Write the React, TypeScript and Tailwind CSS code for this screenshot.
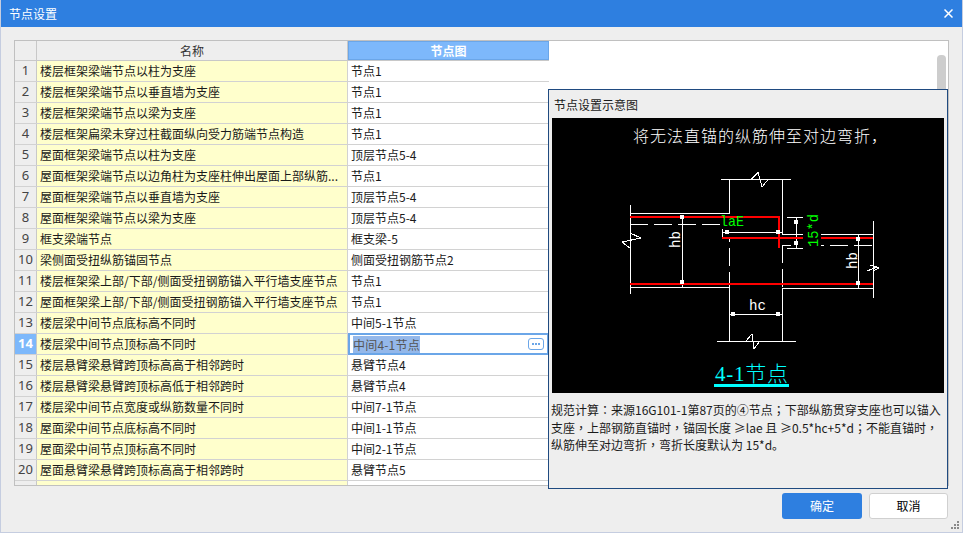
import React from "react";

const cjk = "font-['Noto_Sans_CJK_SC','Noto_Sans','Liberation_Sans',sans-serif]";

const rows = [
	["楼层框架梁端节点以柱为支座", "节点1"],
	["楼层框架梁端节点以垂直墙为支座", "节点1"],
	["楼层框架梁端节点以梁为支座", "节点1"],
	["楼层框架扁梁未穿过柱截面纵向受力筋端节点构造", "节点1"],
	["屋面框架梁端节点以柱为支座", "顶层节点5-4"],
	["屋面框架梁端节点以边角柱为支座柱伸出屋面上部纵筋...", "节点1"],
	["屋面框架梁端节点以垂直墙为支座", "顶层节点5-4"],
	["屋面框架梁端节点以梁为支座", "顶层节点5-4"],
	["框支梁端节点", "框支梁-5"],
	["梁侧面受扭纵筋锚固节点", "侧面受扭钢筋节点2"],
	["楼层框架梁上部/下部/侧面受扭钢筋锚入平行墙支座节点", "节点1"],
	["屋面框架梁上部/下部/侧面受扭钢筋锚入平行墙支座节点", "节点1"],
	["楼层梁中间节点底标高不同时", "中间5-1节点"],
	["楼层梁中间节点顶标高不同时", "中间4-1节点"],
	["楼层悬臂梁悬臂跨顶标高高于相邻跨时", "悬臂节点4"],
	["楼层悬臂梁悬臂跨顶标高低于相邻跨时", "悬臂节点4"],
	["楼层梁中间节点宽度或纵筋数量不同时", "中间7-1节点"],
	["屋面梁中间节点底标高不同时", "中间1-1节点"],
	["屋面梁中间节点顶标高不同时", "中间2-1节点"],
	["屋面悬臂梁悬臂跨顶标高高于相邻跨时", "悬臂节点5"],
];

const noteLines = [
	"规范计算：来源16G101-1第87页的④节点；下部纵筋贯穿支座也可以锚入",
	"支座，上部钢筋直锚时，锚固长度 ≥lae 且 ≥0.5*hc+5*d；不能直锚时，",
	"纵筋伸至对边弯折，弯折长度默认为 15*d。",
];

function Diagram() {
	// viewBox is offset to page coordinates so the numbers read straight off the screenshot
	const white = "M721 179.5H791M729.5 179.5V213.5M782.5 179.5V234.5M630 213.5H729.5M630.5 205V294M630 224.5H648M654 224.5H672M678 224.5H696M702 224.5H720M682.5 215V287M722 232.5H782M722.5 229V237M782 234.5H803M821 234.5H873M782 245.5H791M787 217.5H803M787 248.5H803M796.5 217V248M782.5 245.5V263M782.5 269V287M782.5 288V341M821 245.5H824M830 245.5H848M854 245.5H872M873.5 221V298M858.5 234V288M630 287.5H729.5M782 288.5H873M729.5 239V242M729.5 248V266M729.5 272V287M729.5 287V341M717 341.5H796M729.5 314.5H782.5M751 179.5L758 172.5L762 187L768 179.5M630 233L641 238L622 242L630 248M867 271L877 267L870 265L879 268L873 271V274M746 341L752 334L754 349L760 341";
	return (
		<svg viewBox="552 118 392 275" className="w-[392px] h-[275px] block" shapeRendering="crispEdges">
			<rect x="552" y="118" width="392" height="275" fill="#000" />
			<path d={white} stroke="#fff" strokeWidth="1" fill="none" />
			<path d="M630 216.5H778.5V247.5M722 238H803M821 238H873M630 284H873" stroke="#ff0000" strokeWidth="2" fill="none" />
			{[[682, 217], [682, 282], [727, 232], [778, 232], [796, 222], [796, 243], [858, 239], [858, 283], [733, 314], [778, 314]].map(([x, y]) => (
				<rect key={`${x}-${y}`} x={x - 2} y={y - 2} width="4" height="4" fill="#fff" />
			))}
			<text x="680" y="248" fill="#fff" fontSize="15" fontFamily="Liberation Mono" transform="rotate(-90 680 248)" textLength="17" lengthAdjust="spacingAndGlyphs">hb</text>
			<text x="857" y="269" fill="#fff" fontSize="15" fontFamily="Liberation Mono" transform="rotate(-90 857 269)" textLength="17" lengthAdjust="spacingAndGlyphs">hb</text>
			<text x="749" y="310" fill="#fff" fontSize="15" fontFamily="Liberation Mono" textLength="17" lengthAdjust="spacingAndGlyphs">hc</text>
			<text x="720" y="226" fill="#00ff00" fontSize="15" fontFamily="Liberation Mono" textLength="24" lengthAdjust="spacingAndGlyphs">laE</text>
			<text x="818" y="247" fill="#00ff00" fontSize="15" fontFamily="Liberation Mono" transform="rotate(-90 818 247)" textLength="33" lengthAdjust="spacingAndGlyphs">15*d</text>
			<text x="633" y="142" fill="#fff" fontSize="16" fontWeight="300" fontFamily="Noto Sans CJK SC" letterSpacing="1">将无法直锚的纵筋伸至对边弯折，</text>
			<text x="715" y="381" fill="#00ffff" fontSize="21" fontWeight="300" fontFamily="Liberation Serif, Noto Sans CJK SC" textLength="73">4-1节点</text>
			<rect x="714" y="384" width="75" height="3" fill="#00ffff" />
		</svg>
	);
}

export default function App() {
	return (
		<div className={`w-[963px] h-[533px] relative overflow-hidden bg-[#eeeeee] border-x border-b border-[#c5cde0] flex flex-col text-[12px] text-[#1a1a1a] ${cjk}`}>
			<div className="h-[27px] shrink-0 -mx-px bg-[#2e7fe0] text-white flex items-center justify-between pl-[9px] pr-[10px]">
				<span className="text-[12px]">节点设置</span>
				<svg width="9" height="9" viewBox="0 0 9 9" stroke="#fff" strokeWidth="1.5">
					<path d="M0.5 0.5L8.5 8.5M8.5 0.5L0.5 8.5" />
				</svg>
			</div>

			<div className="mt-[13px] ml-[13px] w-[935px] h-[446px] bg-white border border-[#c0c0c0] overflow-hidden">
				<div className="w-[534px] border-b border-[#c0c0c0]">
					<div className="flex h-[20px] border-b border-[#c8c8c8] bg-[#eeeeee]">
						<div className="w-[22px] border-r border-[#c8c8c8]" />
						<div className="w-[311px] border-r border-[#c8c8c8] flex items-center justify-center text-[#333]">名称</div>
						<div className="w-[201px] bg-[#7db8fb] border border-[#6ba6e8] text-white font-bold flex items-center justify-center">节点图</div>
					</div>
					{rows.map(([name, node], i) => {
						const active = i === 13;
						return (
							<div key={i} className="flex h-[21px] border-b border-[#d2d2d2]">
								<div className={`w-[22px] border-r border-[#c8c8c8] flex items-center justify-center text-[13px] font-['Noto_Sans'] ${active ? "bg-[#7db8fb] text-white font-bold" : "bg-[#eeeeee] text-[#444]"}`}>
									{i + 1}
								</div>
								<div className="w-[311px] bg-[#ffffcc] border-r border-[#d2d2d2] pl-[3px] flex items-center whitespace-nowrap overflow-hidden">{name}</div>
								{active ? (
									<div className="w-[201px] h-[22px] border-2 border-[#6ba6e8] -mt-px flex items-center justify-between pl-[3px] pr-[3px]">
										<span className="bg-[#94b8ea] text-[#555] leading-[17px] tracking-[0.2px]">{node}</span>
										<span className="w-[16px] h-[12px] rounded-[3px] border border-[#6ba6e8] flex items-center justify-center gap-px">
											<i className="w-[2px] h-[2px] bg-[#6ba6e8]" />
											<i className="w-[2px] h-[2px] bg-[#6ba6e8]" />
											<i className="w-[2px] h-[2px] bg-[#6ba6e8]" />
										</span>
									</div>
								) : (
									<div className="w-[201px] pl-[3px] flex items-center whitespace-nowrap">{node}</div>
								)}
							</div>
						);
					})}
					<div className="flex h-[4px]">
						<div className="w-[22px] bg-[#eeeeee] border-r border-[#c8c8c8]" />
						<div className="w-[311px] bg-[#ffffcc] border-r border-[#d2d2d2]" />
					</div>
				</div>
			</div>

			{/* scrollbar thumb, mostly hidden behind the preview popup */}
			<div className="absolute left-[936px] top-[55px] w-[9px] h-[40px] rounded-t-[4px] bg-[#cdcdcd]" />

			{/* preview popup floating over the table */}
			<div className="absolute left-[547px] top-[89px] w-[400px] h-[400px] bg-[#eeeeee] border border-[#1f4a80] flex flex-col">
				<div className="h-[28px] pl-[5px] pt-[7px] leading-[16px]">节点设置示意图</div>
				<div className="ml-[3px]">
					<Diagram />
				</div>
				<div className="mt-[8px] ml-[2px] leading-[17.5px] text-[12px] whitespace-pre">
					{/* the source draws these three marks centred, which is the TC glyph form */}
					{noteLines.map((line) => (
						<div key={line}>
							{line.split(/([：；，])/).map((part, i) =>
								i % 2 ? (
									<span key={i} className="font-['Noto_Sans_CJK_TC']">{part}</span>
								) : (
									<span key={i}>{part}</span>
								)
							)}
						</div>
					))}
				</div>
			</div>

			<div className="mt-[7px] mr-[14px] flex justify-end gap-[7px]">
				<button className="w-[80px] h-[26px] rounded-[3px] bg-[#2e7fe0] text-white">确定</button>
				<button className="w-[79px] h-[26px] rounded-[3px] bg-white border border-[#d0d0d0] text-black">取消</button>
			</div>

			{/* resize grip */}
			<svg className="absolute right-[2px] bottom-[2px]" width="9" height="9" viewBox="0 0 9 9" fill="#8a8a8a">
				<rect x="6" y="0" width="2" height="2" />
				<rect x="3" y="3" width="2" height="2" />
				<rect x="6" y="3" width="2" height="2" />
				<rect x="0" y="6" width="2" height="2" />
				<rect x="3" y="6" width="2" height="2" />
				<rect x="6" y="6" width="2" height="2" />
			</svg>
		</div>
	);
}
